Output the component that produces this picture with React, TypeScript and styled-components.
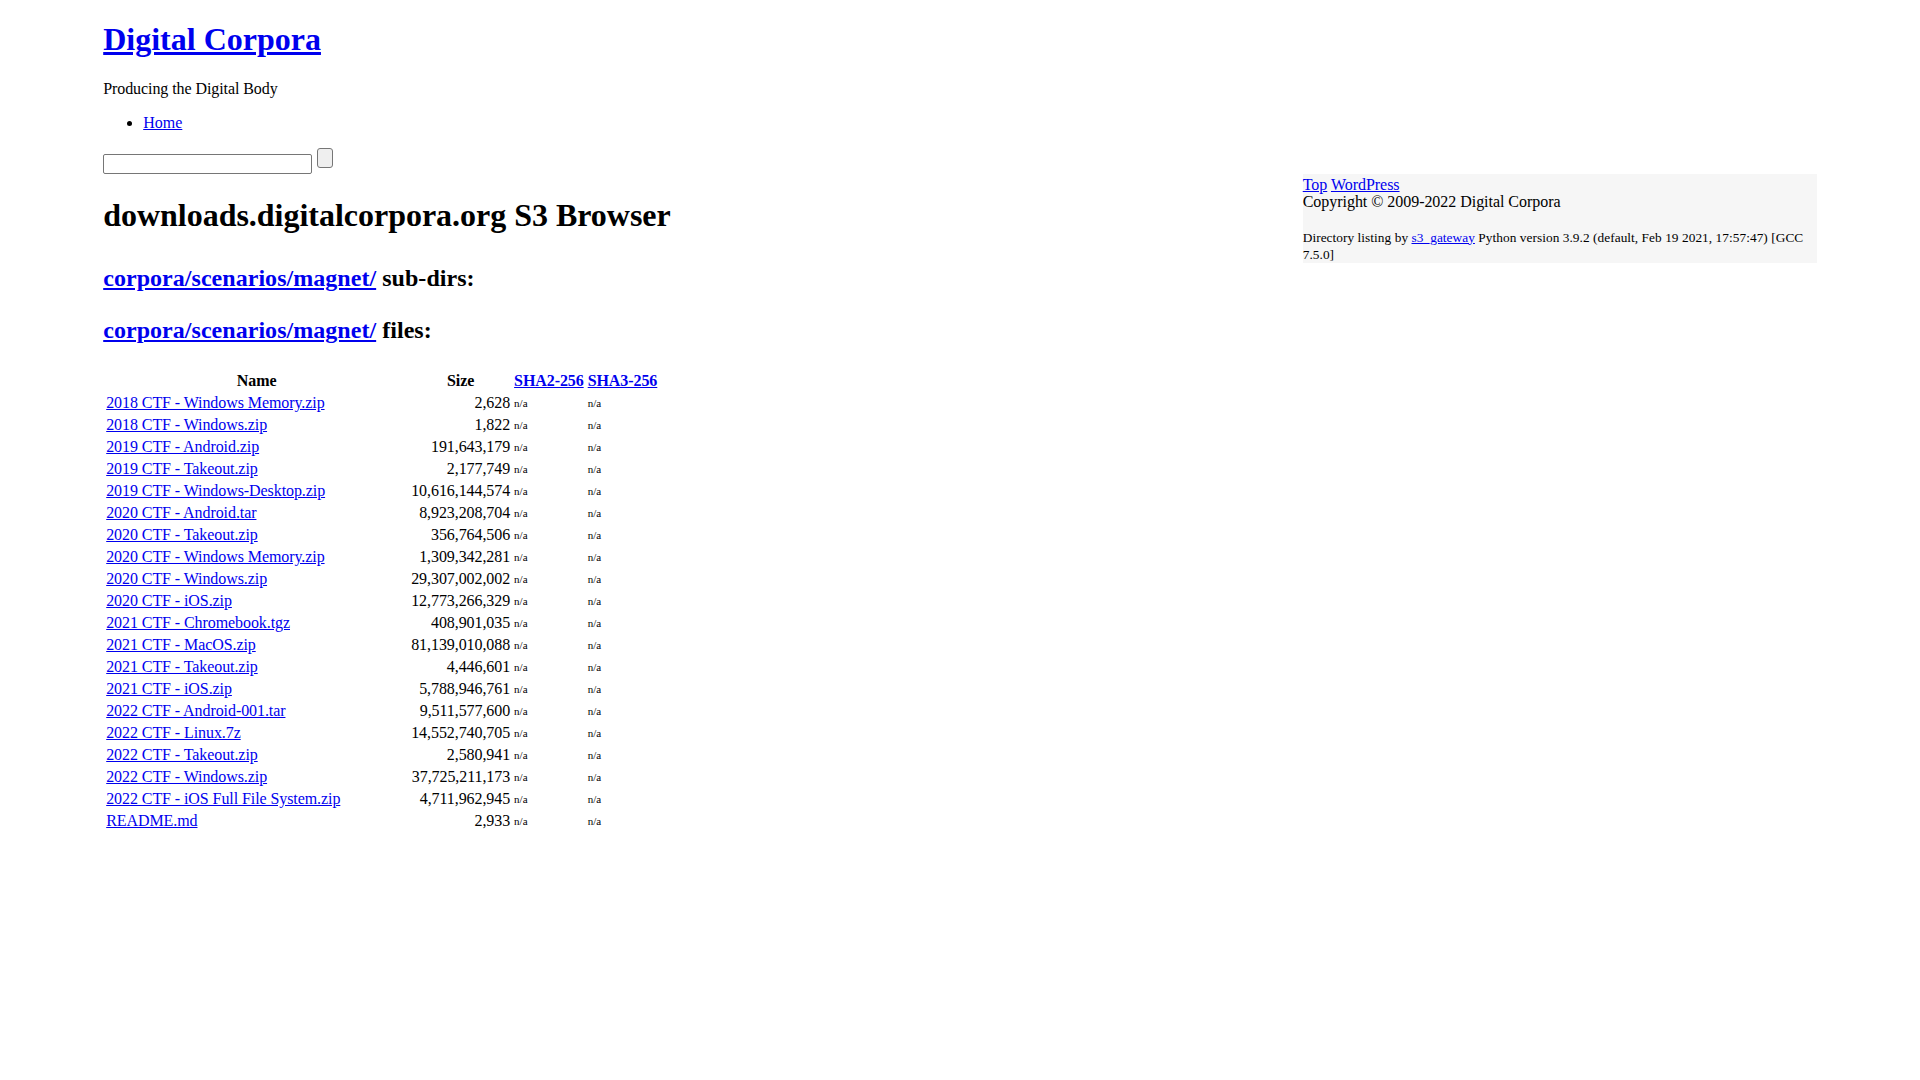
import React from "react";
import styled, { createGlobalStyle } from "styled-components";

const GlobalStyle = createGlobalStyle`
  html, body {
    background: #ffffff;
  }
  body {
    margin: 0 8px;
    font-family: "Liberation Serif", "Times New Roman", serif;
    font-size: 16px;
    color: #000000;
  }
`;

const Page = styled.div`
  width: 90%;
  margin: 0 auto;
  padding-top: 21.44px;
`;

const Link = styled.a`
  color: #0000ee;
  text-decoration: underline;
  cursor: pointer;
`;

const SiteTitle = styled.h1`
  font-size: 32px;
  font-weight: bold;
  margin: 0 0 21.44px;
`;

const Tagline = styled.p`
  margin: 16px 0;
  letter-spacing: -0.08px;
`;

const NavList = styled.ul`
  margin: 16px 0;
  padding-left: 40px;
  list-style: disc;
`;

const SearchForm = styled.form`
  display: flex;
  align-items: flex-start;
  gap: 5px;
  height: 26px;
  margin: 0;
`;

const SearchInput = styled.input`
  box-sizing: border-box;
  width: 209px;
  height: 20px;
  margin: 6px 0 0;
  padding: 1px 2px;
  border: 1px solid #767676;
  border-radius: 2px;
  background: #ffffff;
  font-family: "Liberation Sans", Arial, sans-serif;
  font-size: 13.33px;
`;

const SearchButton = styled.button`
  box-sizing: border-box;
  width: 16px;
  height: 20px;
  margin: 0;
  padding: 0;
  border: 1px solid #767676;
  border-radius: 3px;
  background: #efefef;
`;

const ContentRow = styled.div`
  display: flex;
  justify-content: space-between;
  align-items: flex-start;
`;

const Main = styled.div`
  flex: 1;
  min-width: 0;
`;

const PageTitle = styled.h1`
  font-size: 32px;
  font-weight: bold;
  margin: 23.5px 0 21.44px;
  letter-spacing: -0.02px;
`;

const SectionHeading = styled.h2<{ $first?: boolean }>`
  font-size: 24px;
  font-weight: bold;
  margin: ${(p) => (p.$first ? "31px" : "24.5px")} 0 24.5px;
  letter-spacing: 0.04px;
`;

const FileTable = styled.table`
  border-collapse: separate;
  border-spacing: 2px;
  margin: 25px 0 0;
  font-size: 16px;
  letter-spacing: -0.08px;
`;

const HeadCell = styled.th<{ $width?: number }>`
  padding: 1px;
  font-weight: bold;
  text-align: center;
  width: ${(p) => (p.$width ? `${p.$width}px` : "auto")};
`;

const NameCell = styled.td`
  padding: 1px;
  text-align: left;
`;

const SizeCell = styled.td`
  padding: 1px;
  text-align: right;
  white-space: nowrap;
`;

const HashCell = styled.td`
  padding: 1px;
  text-align: left;
  font-size: 11px;
  letter-spacing: 0;
`;

const Sidebar = styled.aside`
  width: 30%;
  padding-top: 2px;
  background: #f6f6f6;
  font-size: 16px;
  line-height: 17.33px;
`;

const FooterLine = styled.div`
  letter-spacing: -0.04px;
`;

const ListingNote = styled.p`
  margin: 18px 0 0;
  font-size: 13.33px;
  line-height: 17.33px;
  letter-spacing: 0.05px;
`;

const files: [string, string][] = [
  ["2018 CTF - Windows Memory.zip", "2,628"],
  ["2018 CTF - Windows.zip", "1,822"],
  ["2019 CTF - Android.zip", "191,643,179"],
  ["2019 CTF - Takeout.zip", "2,177,749"],
  ["2019 CTF - Windows-Desktop.zip", "10,616,144,574"],
  ["2020 CTF - Android.tar", "8,923,208,704"],
  ["2020 CTF - Takeout.zip", "356,764,506"],
  ["2020 CTF - Windows Memory.zip", "1,309,342,281"],
  ["2020 CTF - Windows.zip", "29,307,002,002"],
  ["2020 CTF - iOS.zip", "12,773,266,329"],
  ["2021 CTF - Chromebook.tgz", "408,901,035"],
  ["2021 CTF - MacOS.zip", "81,139,010,088"],
  ["2021 CTF - Takeout.zip", "4,446,601"],
  ["2021 CTF - iOS.zip", "5,788,946,761"],
  ["2022 CTF - Android-001.tar", "9,511,577,600"],
  ["2022 CTF - Linux.7z", "14,552,740,705"],
  ["2022 CTF - Takeout.zip", "2,580,941"],
  ["2022 CTF - Windows.zip", "37,725,211,173"],
  ["2022 CTF - iOS Full File System.zip", "4,711,962,945"],
  ["README.md", "2,933"],
];

export default function App() {
  return (
    <>
      <GlobalStyle />
      <Page>
        <SiteTitle>
          <Link href="#">Digital Corpora</Link>
        </SiteTitle>
        <Tagline>Producing the Digital Body</Tagline>
        <NavList>
          <li>
            <Link href="#">Home</Link>
          </li>
        </NavList>
        <SearchForm onSubmit={(e) => e.preventDefault()}>
          <SearchInput type="text" />
          <SearchButton type="submit" />
        </SearchForm>
        <ContentRow>
          <Main>
            <PageTitle>downloads.digitalcorpora.org S3 Browser</PageTitle>
            <SectionHeading $first>
              <Link href="#">corpora/scenarios/magnet/</Link> sub-dirs:
            </SectionHeading>
            <SectionHeading>
              <Link href="#">corpora/scenarios/magnet/</Link> files:
            </SectionHeading>
            <FileTable>
              <thead>
                <tr>
                  <HeadCell $width={301}>Name</HeadCell>
                  <HeadCell>Size</HeadCell>
                  <HeadCell>
                    <Link href="#">SHA2-256</Link>
                  </HeadCell>
                  <HeadCell>
                    <Link href="#">SHA3-256</Link>
                  </HeadCell>
                </tr>
              </thead>
              <tbody>
                {files.map(([name, size]) => (
                  <tr key={name}>
                    <NameCell>
                      <Link href="#">{name}</Link>
                    </NameCell>
                    <SizeCell>{size}</SizeCell>
                    <HashCell>n/a</HashCell>
                    <HashCell>n/a</HashCell>
                  </tr>
                ))}
              </tbody>
            </FileTable>
          </Main>
          <Sidebar>
            <FooterLine>
              <Link href="#">Top</Link> <Link href="#">WordPress</Link>
            </FooterLine>
            <FooterLine>Copyright © 2009-2022 Digital Corpora</FooterLine>
            <ListingNote>
              Directory listing by <Link href="#">s3_gateway</Link> Python
              version 3.9.2 (default, Feb 19 2021, 17:57:47) [GCC 7.5.0]
            </ListingNote>
          </Sidebar>
        </ContentRow>
      </Page>
    </>
  );
}
